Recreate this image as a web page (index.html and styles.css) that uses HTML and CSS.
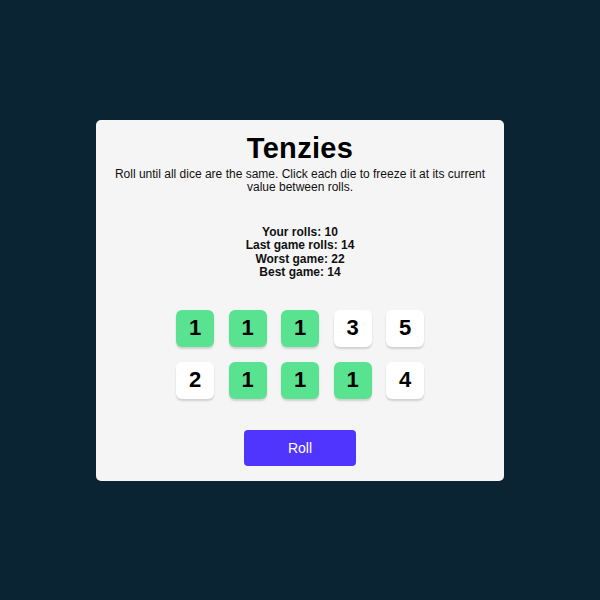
FILE: index.html
```html
<!DOCTYPE html>
<html>
<head>
<meta charset="utf-8">
<link rel="stylesheet" href="styles.css">
</head>
<body>
<main class="card">
  <h1 class="title">Tenzies</h1>
  <p class="instructions">Roll until all dice are the same. Click each die to freeze it at its current value between rolls.</p>
  <div class="stats">
    <div>Your rolls: 10</div>
    <div>Last game rolls: 14</div>
    <div>Worst game: 22</div>
    <div>Best game: 14</div>
  </div>
  <div class="dice">
    <div class="die held">1</div>
    <div class="die held">1</div>
    <div class="die held">1</div>
    <div class="die">3</div>
    <div class="die">5</div>
    <div class="die">2</div>
    <div class="die held">1</div>
    <div class="die held">1</div>
    <div class="die held">1</div>
    <div class="die">4</div>
  </div>
  <button class="roll">Roll</button>
</main>
</body>
</html>
```
FILE: styles.css
```css
html, body {
  margin: 0;
  height: 100%;
}
body {
  background: #0B2434;
  font-family: "Liberation Sans", Arial, sans-serif;
  display: flex;
  align-items: center;
  justify-content: center;
}
.card {
  width: 408px;
  height: 361px;
  box-sizing: border-box;
  background: #F5F5F5;
  border-radius: 5px;
  display: flex;
  flex-direction: column;
  align-items: center;
  padding-top: 11.5px;
}
.title {
  margin: 0;
  font-size: 29px;
  letter-spacing: 0.3px;
  line-height: 34px;
  font-weight: bold;
  color: #000;
}
.instructions {
  margin: 3px 0 0;
  font-size: 12px;
  line-height: 12.7px;
  text-align: center;
  width: 390px;
  color: #111;
}
.stats {
  margin-top: 32.5px;
  font-size: 12px;
  line-height: 13.5px;
  font-weight: bold;
  text-align: center;
  color: #111;
}
.dice {
  margin-top: 30px;
  display: grid;
  grid-template-columns: repeat(5, 38px);
  grid-auto-rows: 37px;
  column-gap: 14.5px;
  row-gap: 15px;
}
.die {
  background: #fff;
  border-radius: 6px;
  box-shadow: 0 2px 2px rgba(0,0,0,0.15);
  display: flex;
  align-items: center;
  justify-content: center;
  font-size: 22px;
  font-weight: bold;
  color: #000;
}
.die.held {
  background: #59E391;
}
.roll {
  margin-top: 31px;
  width: 112px;
  height: 36px;
  border: none;
  border-radius: 4px;
  background: #5035FF;
  color: #fff;
  font-family: "Liberation Sans", Arial, sans-serif;
  font-size: 14px;
}
```
